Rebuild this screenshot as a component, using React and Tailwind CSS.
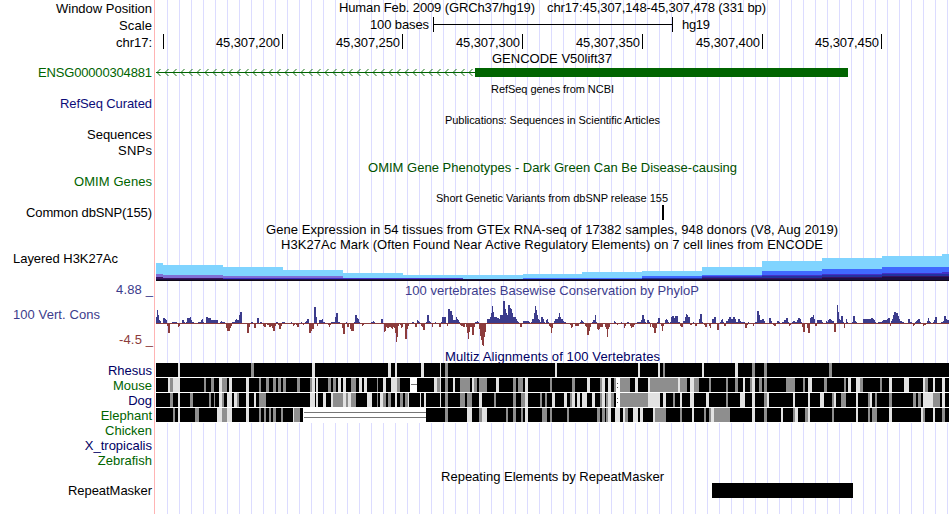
import { Fragment } from "react";

const LEFT = 155;
const WIDTH = 794;

const ticks = [
  { x: 163 },
  { x: 282, label: "45,307,200" },
  { x: 402, label: "45,307,250" },
  { x: 522, label: "45,307,300" },
  { x: 642, label: "45,307,350" },
  { x: 762, label: "45,307,400" },
  { x: 881, label: "45,307,450" },
];

// steps are [x, top], every layer is filled down to y 281
const h3k27ac = [
  { color: "#80d4ff", steps: [[156, 263], [163, 265], [223, 267], [283, 270], [343, 273], [403, 275], [523, 274], [582, 272], [642, 271], [702, 267], [762, 261], [822, 258], [882, 256], [942, 254], [949, 281]] },
  { color: "#7f6fd6", steps: [[156, 274], [163, 275], [223, 276], [343, 281]] },
  { color: "#4069ff", steps: [[223, 278], [463, 279], [523, 278], [642, 276], [702, 275], [762, 271], [822, 269], [882, 267], [949, 281]] },
  { color: "#4530c8", steps: [[223, 278], [463, 281], [702, 276], [762, 275], [822, 274], [882, 273], [942, 272], [949, 281]] },
  { color: "#2233a0", steps: [[642, 278], [702, 277], [762, 276], [822, 275], [882, 274], [949, 281]] },
  { color: "#3a1060", steps: [[156, 277], [163, 278], [223, 279], [702, 278], [762, 278], [822, 277], [882, 276], [949, 281]] },
  { color: "#1c1040", steps: [[156, 279], [762, 279], [822, 278], [882, 277], [949, 281]] },
  { color: "#100818", steps: [[156, 280], [949, 281]] },
];

// runs of per-pixel scores: [first x, heights]
const phyloP = [
  [156, [6, 13, 8, 3, 2, -1, -1, 5, 5, 4, 3, -3, -10, -10, -1, -1, 1, 1, 1, 1, 1, -1, -4, -3, -1, -1, 3, 3, 1, -1, 1, 5, 5, 5, 6, 3, 1, 1]],
  [198, [1, 1, 1, 3, 4, 1, -1, -1, 6, 6, 5, 5, 5, 3, 3, 3, 3, 3, 3, 3, -1, -1, 1, 2, 1, 1, 1, -1, -5, -8, -8, -8, -5, -3, 1, 1, 1, 3, 4, 3, 3, 8, 11, 11]],
  [247, [-10, -10, -4, -1, 1, 1, -1, -5, -5, -1, 5, 5, -1, 1, 1, -1, -3, -4, -4, -1, -2, -2, -4, -4, -3, -5, -8, -8, -3, 1, 1, -2, -6, -6, -3, 1, 1, 1]],
  [291, [1, -1, -3, -2, -1, -2, -4, -4, -1, -1, 1, -1, -2, -1, 1, 2, 4, 4, -10, -10, -8, -6, -6, 16, 16, 6, -3, -1, 3, 3, 3, 4, 1, 1, -1, -1, -1, -2, -4, -2, 1, 1, 1, 1, 6, 10, 10, 1, 1, -1, -1, -5, -11, -11, -1, 1, -4, -4, -1, -6, -8, -8, -8, 1, 8, 8, 5, 4, 1, -1, -1, -3, -2]],
  [371, [1, 1, 2, 1]],
  [381, [4, 4, -1, -9, -8, -4, -5, -5, -4, -4, -5, -6, -4, -5, -10, -19, -14, -3, -1, -2, -5, -4, -1, -1, -16, -16, -6, -3, -1, -1, -1, 1, 1, -1, -4, -4, 3, 2, 1, -1, -3, -4, -7, -7, -1, 1, 8, 8, 2, 1, -1]],
  [432, [-4, -1, -1, 1, -1, -1, -1, -4, -4, 1, 6, 6, 6, 6, -1, -3, 14, 14, 12, 12, 8, 3, 3, 3, 6, 4, 3, 1, -2, -3, -3, -4, -4, -1, -4, -10, -16, -9, -4, -4, -12, -12, -4, 1, 1, 2, 1, -6, -13, -17, -22, -23, -14, -9, -1, 4, 4, 4, 6, 10, 17, 11, 6, 6, 6, 5, 5, 4]],
  [500, [8, 8, 8, 22, 22, 14, 10, 8, 18, 18, 15, 14, 10, 6, 6, 6, 4, 2, 1, -1, -4, -4, -1, 2, 2, 2, 2, 2, 2, 1, -1, 1, 4, 4, 10, 17, 13, 8, 4, 3, 1, 6, 6, 4, 1, -1, 3, 4, 1, -3, -4, -10, -5, -1, 2, 4, 4, 4, 6, 10, 6, 4, 4, 2, 1, 1, -1, -1, -1, -1, -2, -5, -4, -1, -1, -3, -3, -3, -3, -1, 1, 3, 2, 1, -1, -3, -4, -12, -12, -8, -4, -1, 1, 3, 3, 8, 1, -6, -7, -6, -4, -4, -4, -1, -1, -4, -6, -14, -6, -4, -1]],
  [614, [2, 1, -1, -2, -1, -1, -1, 1, -1, -1, -5, -3, -1, 1, 1, -1, -3, -5, -4, -4, -2]],
  [637, [1, 1, 1, 1, 3, 8, 8, 4, 1, -1, 3, 3, 1, -4, -1, -4, -5, -10, -10, -5, 1, 5, 5, -1, -3, -8, -3, -1, 3, 4, 3, 1, -1, 1, 6, 7, 7, 5, 7, 7, 7, 1, 1]],
  [680, [-3, -4, -4, 2, 2, 6, 9, 8, 6, 6, -2, -2, -1, 1, -1, -3, -3, -1, -1, 4, 9, 9, 1, -1, -2, -4, -4, -1, -1, -3, -5, -1, 4, 4, 6, 6, -1, -7, -7, -1, 1, 3, 4, 1, -3, -3, 2, 2, 4, 6, 6, 4, 4, 6, 6, 4, 1, 1, 4, 4, 2, 1, 1, 1, 1, -5, -5, -2, 1, -1, -1, -1, -1, -3, -1, 1, 1, 12, 12, 8, 3, 3, 4, 4, 2]],
  [769, [5, 5, 2, -1, -2, -3, -3, -1, 2, 2, 1, -1, -1, 1, 1, 3, 3, 5, 5, 1, -3, -2, -1, 1, 2, 2, 1, 1, 3, 5, 5, 4, 1, -4, -9, -9, -1, -1, -5, -10, -10, 5, 6, 6, 8, 4, -3, -3, 3, 3, 3, 3, 3, 1, -1, -1, -1, 2, 1, 3, 4, 4, 3, 2, 2, -9, -9, -1, 18, 11, 4, 3, 7, 7, 1, -5, -1, 4, 1]],
  [852, [1, 7, 7, 2, 1]],
  [863, [4, 4, 4, 4, 4, 4, 4, 4, 5, 5, 4, 3, 1, -1, -1, 1, 1, 1, 1, 2, 3, 3, 3, 3, 4, 5, 5, -3, 2, 4, 8, 11, 11, 10, 10, 7, 4, 2, 2, 1, 1, -1, -1, -1, -1, 4, 4, 1, 1, -1, -3, -2, 1, 2, 3, 4, 4, 1, -1, -1, -3, -2, -2, -1, 2, 5, 2, 1, -1, -1, 1, 3, 6, 6, -1, -1, -1, -1, 1, 1, 2, 7, 7, 4, 3, 3]],
];

const L = "#e2e2e2";
const G = "#8e8e8e";

const species = [
  {
    name: "Rhesus",
    color: "text-[#000064]",
    blocks: [[156, 949]],
    marks: [[178, 2, L], [251, 3, G], [312, 3, L], [388, 3, L], [395, 2, L], [421, 3, L], [440, 1, L], [445, 3, G], [555, 2, L], [638, 2, L], [658, 2, L], [663, 2, G], [702, 2, L], [735, 3, L], [752, 3, G], [764, 3, G], [829, 3, G]],
    gaps: [],
  },
  {
    name: "Mouse",
    color: "text-[#006400]",
    blocks: [[156, 410], [417, 949]],
    marks: [[168, 2, L], [170, 3, G], [173, 7, L], [204, 2, G], [211, 3, G], [219, 3, L], [222, 5, G], [229, 3, L], [246, 3, L], [259, 2, G], [266, 3, G], [273, 3, G], [278, 3, G], [283, 3, G], [297, 3, G], [310, 2, G], [312, 3, L], [316, 2, L], [328, 3, G], [333, 3, G], [338, 3, L], [343, 3, L], [351, 5, G], [359, 3, L], [364, 3, L], [377, 1, G], [383, 3, L], [391, 6, L], [397, 3, G], [434, 3, L], [437, 3, G], [440, 1, L], [445, 3, G], [453, 2, L], [460, 10, G], [472, 2, L], [474, 3, G], [479, 8, G], [496, 3, L], [513, 3, G], [518, 5, G], [525, 3, L], [550, 2, G], [572, 3, G], [587, 3, L], [600, 2, G], [602, 3, L], [608, 3, L], [614, 2, G], [616, 4, "#fff"], [620, 10, G], [635, 3, L], [648, 2, L], [650, 28, G], [678, 2, L], [680, 7, G], [690, 4, L], [694, 5, G], [709, 2, G], [726, 2, G], [735, 3, G], [743, 2, L], [750, 2, G], [752, 3, L], [759, 3, G], [764, 3, G], [786, 9, G], [803, 2, G], [808, 4, L], [824, 3, G], [844, 2, G], [848, 3, L], [856, 4, L], [860, 3, G], [880, 2, G], [889, 3, L], [904, 5, L], [923, 2, L], [925, 3, G], [933, 2, L], [942, 3, L]],
    gaps: [[411, 6, 6]],
    dots: true,
  },
  {
    name: "Dog",
    color: "text-[#000064]",
    blocks: [[156, 949]],
    marks: [[170, 3, G], [178, 2, L], [190, 3, G], [209, 2, G], [214, 1, G], [219, 3, L], [222, 2, G], [227, 5, L], [234, 3, L], [237, 2, G], [246, 3, L], [254, 2, L], [259, 7, G], [310, 5, L], [316, 2, L], [323, 3, L], [331, 2, L], [333, 10, G], [343, 3, L], [346, 2, G], [348, 3, L], [351, 5, G], [367, 5, L], [377, 1, G], [380, 3, L], [383, 3, G], [388, 3, G], [395, 2, L], [400, 3, G], [405, 3, G], [408, 1, L], [420, 1, L], [424, 2, L], [440, 1, L], [445, 3, G], [460, 5, G], [467, 5, G], [479, 3, L], [494, 2, G], [513, 3, G], [521, 4, G], [525, 3, L], [540, 2, G], [545, 2, G], [552, 3, L], [564, 3, L], [570, 2, G], [572, 3, L], [577, 3, L], [582, 5, L], [592, 3, L], [600, 2, G], [602, 3, L], [606, 2, G], [608, 3, L], [611, 3, G], [616, 4, "#fff"], [620, 28, G], [648, 12, L], [663, 3, L], [673, 2, G], [680, 2, L], [690, 4, L], [706, 3, L], [726, 2, G], [740, 5, L], [752, 3, L], [764, 3, G], [767, 2, L], [793, 2, L], [808, 2, L], [820, 4, L], [832, 2, G], [834, 2, L], [841, 5, G], [856, 2, L], [868, 2, G], [870, 2, L], [875, 2, G], [889, 3, G], [913, 3, G], [918, 3, G], [923, 10, L], [933, 7, G], [942, 3, L]],
    gaps: [],
    dots: true,
  },
  {
    name: "Elephant",
    color: "text-[#006400]",
    blocks: [[156, 303], [426, 949]],
    marks: [[173, 2, G], [178, 2, L], [195, 4, G], [217, 5, L], [222, 5, G], [227, 5, L], [246, 3, L], [259, 2, G], [264, 2, G], [269, 2, G], [273, 3, G], [281, 2, G], [293, 1, L], [294, 6, G], [445, 3, G], [467, 5, L], [479, 3, G], [482, 5, L], [506, 2, G], [513, 3, G], [521, 2, G], [525, 3, L], [542, 5, G], [550, 2, G], [567, 2, G], [597, 3, G], [602, 3, G], [606, 2, G], [608, 3, L], [615, 5, L], [623, 2, L], [625, 3, G], [633, 5, L], [640, 3, L], [653, 2, L], [655, 11, G], [680, 2, G], [692, 2, L], [704, 2, G], [709, 2, G], [711, 3, L], [714, 16, G], [752, 3, L], [764, 3, G], [781, 2, L], [793, 2, G], [795, 3, L], [805, 3, G], [808, 2, L], [832, 2, G], [856, 2, L], [868, 2, G], [872, 5, G], [889, 3, L], [921, 2, L], [923, 2, G], [933, 2, L], [942, 3, G]],
    gaps: [[304, 122, 4], [304, 122, 9]],
  },
];

const absent = [
  { name: "Chicken", color: "text-[#006400]" },
  { name: "X_tropicalis", color: "text-[#000064]" },
  { name: "Zebrafish", color: "text-[#006400]" },
];

// svg whose user units are browser window pixels
const Track = ({ y, h, children }) => (
  <svg
    className="block shrink-0 overflow-visible"
    width={WIDTH}
    height={h}
    viewBox={`${LEFT} ${y} ${WIDTH} ${h}`}
    shapeRendering="crispEdges"
  >
    {children}
  </svg>
);

// a text with a fixed drawn width, placed inside its track
const Label = ({ x, y, w, size = 13, fill = "#000", children }) => (
  <text
    x={x}
    y={y}
    textLength={w}
    fontSize={size}
    fill={fill}
    lengthAdjust="spacing"
    xmlSpace="preserve"
  >
    {children}
  </text>
);

const Row = ({ y, h, side, children }) => (
  <div className="flex">
    <div className="w-[155px] shrink-0 border-r border-[#ffb4b4]">
      <svg
        className="block overflow-visible"
        width="154"
        height={h}
        viewBox={`0 ${y} 154 ${h}`}
      >
        {side}
      </svg>
    </div>
    <Track y={y} h={h}>
      {children}
    </Track>
  </div>
);

const areaPath = (steps) => {
  let d = `M${steps[0][0]} 281`;
  steps.forEach(([x, y]) => {
    d += `H${x}V${y}`;
  });
  return d + "V281Z";
};

const arrows = [];
for (let x = 157; x < 474; x += 8) arrows.push(x);

const App = () => {
  return (
    <div className="h-[514px] w-[949px] overflow-hidden bg-white bg-[repeating-linear-gradient(to_right,#dcdcff_0px,#dcdcff_1px,transparent_1px,transparent_12px)] bg-[position:167px_0] bg-no-repeat font-['Liberation_Sans',Arial,sans-serif]">
      {/* position and scale */}
      <Row
        y={0}
        h={51}
        side={
          <>
            <Label x={56} y={13} w={96}>Window Position</Label>
            <Label x={119} y={30} w={33}>Scale</Label>
            <Label x={116} y={47} w={36}>chr17:</Label>
          </>
        }
      >
        <Label x={339} y={12} w={196}>Human Feb. 2009 (GRCh37/hg19)</Label>
        <Label x={547} y={12} w={219}>chr17:45,307,148-45,307,478 (331 bp)</Label>
        <Label x={370} y={29} w={59}>100 bases</Label>
        <Label x={682} y={29} w={28}>hg19</Label>
        <path d="M433 17h1v15h-1zM672 17h1v15h-1zM433 24h240v1h-240z" />
        {ticks.map((t) => (
          <Fragment key={t.x}>
            <rect x={t.x} y={34} width={1} height={15} />
            {t.label && <Label x={t.x - 66} y={47} w={64}>{t.label}</Label>}
          </Fragment>
        ))}
      </Row>

      {/* genes */}
      <Row
        y={51}
        h={60}
        side={
          <>
            <Label x={38} y={77} w={114} fill="#006400">ENSG00000304881</Label>
            <Label x={60} y={108} w={92} fill="#0c0c78">RefSeq Curated</Label>
          </>
        }
      >
        <Label x={492} y={63} w={120}>GENCODE V50lift37</Label>
        <rect x={156} y={72} width={319} height={1} fill="#006400" />
        {arrows.map((x) => (
          <path
            key={x}
            d={`M${x + 3.5} 69l-3.5 3.5l3.5 3.5`}
            fill="none"
            stroke="#006400"
            strokeWidth={0.9}
            shapeRendering="auto"
          />
        ))}
        <rect x={475} y={68} width={373} height={9} fill="#006400" />
        <Label x={491} y={93} w={123} size={11}>RefSeq genes from NCBI</Label>
      </Row>

      {/* publications, phenotypes and variants */}
      <Row
        y={111}
        h={140}
        side={
          <>
            <Label x={87} y={139} w={65}>Sequences</Label>
            <Label x={118} y={155} w={34}>SNPs</Label>
            <Label x={74} y={186} w={78} fill="#006400">OMIM Genes</Label>
            <Label x={26} y={217} w={126}>Common dbSNP(155)</Label>
          </>
        }
      >
        <Label x={445} y={124} w={215} size={11}>Publications: Sequences in Scientific Articles</Label>
        <Label x={368} y={172} w={369} fill="#005000">OMIM Gene Phenotypes - Dark Green Can Be Disease-causing</Label>
        <Label x={436} y={202} w={232} size={11}>Short Genetic Variants from dbSNP release 155</Label>
        <rect x={662} y={205} width={2} height={15} />
        <Label x={266} y={234} w={572}>Gene Expression in 54 tissues from GTEx RNA-seq of 17382 samples, 948 donors (V8, Aug 2019)</Label>
        <Label x={281} y={249} w={542}>H3K27Ac Mark (Often Found Near Active Regulatory Elements) on 7 cell lines from ENCODE</Label>
      </Row>

      {/* layered histone marks */}
      <Row
        y={251}
        h={31}
        side={<Label x={13} y={263} w={105}>Layered H3K27Ac</Label>}
      >
        {h3k27ac.map((layer) => (
          <path key={layer.color} d={areaPath(layer.steps)} fill={layer.color} />
        ))}
      </Row>

      {/* conservation */}
      <Row
        y={282}
        h={66}
        side={
          <>
            <Label x={116} y={294} w={37} fill="#3c3c8c">4.88 _</Label>
            <Label x={13} y={319} w={87} fill="#3c3c8c">100 Vert. Cons</Label>
            <Label x={119} y={344} w={34} fill="#8c3c3c">-4.5 _</Label>
          </>
        }
      >
        <Label x={405} y={295} w={294} fill="#3c3c8c">100 vertebrates Basewise Conservation by PhyloP</Label>
        <rect x={156} y={323} width={793} height={1} fill="#8c3c3c" />
        {phyloP.map(([start, scores]) =>
          scores.map((s, i) => (
            <rect
              key={start + i}
              x={start + i}
              y={s > 0 ? 323 - s : 323}
              width={1}
              height={Math.abs(s)}
              fill={s > 0 ? "#3c3c8c" : "#8c3c3c"}
            />
          ))
        )}
      </Row>

      {/* alignments */}
      <Row y={348} h={15}>
        <Label x={445} y={361} w={215} fill="#000064">Multiz Alignments of 100 Vertebrates</Label>
      </Row>
      <div className="flex">
        <div className="w-[155px] shrink-0 border-r border-[#ffb4b4] pr-0.5 text-right text-[13px] leading-[15px]">
          {[...species, ...absent].map((s) => (
            <div key={s.name} className={s.color}>{s.name}</div>
          ))}
        </div>
        <div className="h-[105px]">
          {species.map((s) => (
            <Track key={s.name} y={0} h={15}>
              <rect x={156} y={14} width={793} height={1} fill="#fff" />
              {s.gaps.length > 0 && (
                <rect x={303} y={0} width={123} height={14} fill="#fff" />
              )}
              {s.blocks.map(([a, b]) => (
                <rect key={a} x={a} y={0} width={b - a} height={14} />
              ))}
              {s.marks.map(([x, w, fill]) => (
                <rect key={x} x={x} y={0} width={w} height={14} fill={fill} />
              ))}
              {s.gaps.map(([x, w, y]) => (
                <rect key={y} x={x} y={y} width={w} height={1} fill="#767676" />
              ))}
              {s.dots && <path d="M617 5h1v1h-1zM617 9h1v1h-1z" fill="#555" />}
            </Track>
          ))}
        </div>
      </div>

      {/* repeats */}
      <Row
        y={468}
        h={46}
        side={<Label x={68} y={495} w={84}>RepeatMasker</Label>}
      >
        <Label x={441} y={481} w={223}>Repeating Elements by RepeatMasker</Label>
        <rect x={712} y={483} width={141} height={15} />
      </Row>
    </div>
  );
};

export default App;
